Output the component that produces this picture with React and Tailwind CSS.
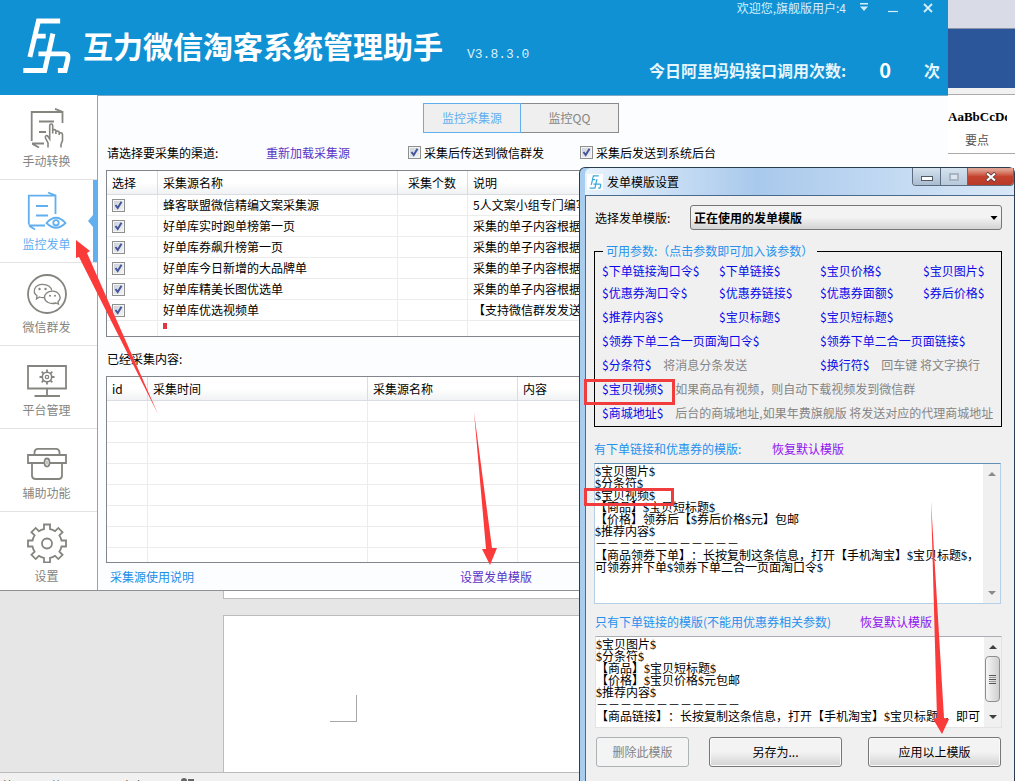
import React from 'react';

const UI = "font-['Noto_Sans_CJK_SC','Noto_Sans',sans-serif] [text-spacing-trim:space-all]";

function LogoMark({ className }) {
  return (
    <svg viewBox="18 20 152 172" className={className} fill="none" stroke="currentColor" strokeWidth="15" aria-hidden="true">
      <path d="M134 31.500H68L42 141M54 77.500H90" />
      <path d="M112 70L87 182H22" />
      <path d="M68 131.500H149Q160 133 157.500 146L149 182H127" />
    </svg>
  );
}

function gearPath(cx, cy, outer, inner, half, teeth) {
  const parts = [];
  const base = Math.sqrt(inner * inner - half * half);
  for (let k = 0; k < teeth; k += 1) {
    const a = (k * 2 * Math.PI) / teeth;
    const at = (x, y) =>
      `${(cx + x * Math.cos(a) - y * Math.sin(a)).toFixed(2)} ${(cy + x * Math.sin(a) + y * Math.cos(a)).toFixed(2)}`;
    parts.push(`${k === 0 ? 'M' : `A${inner} ${inner} 0 0 1 `}${at(-half, -base)}`);
    parts.push(`L${at(-half, -outer)}L${at(half, -outer)}L${at(half, -base)}`);
  }
  parts.push(`A${inner} ${inner} 0 0 1 ${cx - half} ${(cy - base).toFixed(2)}Z`);
  return parts.join('');
}

function Icon({ children }) {
  return (
    <svg viewBox="0 0 40 40" className="h-10 w-10" fill="none" stroke="currentColor" strokeWidth="1.8" aria-hidden="true">
      {children}
    </svg>
  );
}

const icons = {
  convert: (
    <Icon>
      <path d="M35.500 15V4H4.700V33M28 0.800L36 4M5 35.500H17M5.500 36L12 39.500" />
      <path d="M12 13.500H27M12 24H19" />
      <path d="M21 39.500V35L18.500 30C17.700 27.500 20 26.800 21 28.500L22.700 31V17.500C22.700 15.500 25.700 15.500 25.700 17.500V25.500V22.500C26.300 21.300 28.900 21.300 28.900 23V26V23.800C29.500 22.600 32.200 22.900 32.200 24.400V27V25.500C33 24.300 35.500 24.600 35.500 26.400V32.500L34 36.500V39.500" strokeWidth="1.600" />
    </Icon>
  ),
  monitor: (
    <Icon>
      <path d="M28.500 23V4.700H1.800V33.500M21 1.500L29 4.700M1.800 34.500H18M2.500 35L8 38.500" />
      <path d="M9 15H21M9 24.500H21" />
      <path d="M19.500 32Q29 21.500 38.500 32Q29 41.500 19.500 32Z" />
      <circle cx="29" cy="31.800" r="2.700" />
    </Icon>
  ),
  wechat: (
    <Icon>
      <circle cx="20" cy="20" r="19" />
      <path d="M17.500 23.500Q15 24 12.500 23L9.500 25L10 21.800C4.500 17.500 8 10.300 15.500 10.300C21 10.300 24.500 13.500 24.700 16.500" strokeWidth="1.300" />
      <path d="M29 29L31.500 30.200L31 27.800C35.500 24 32 17.200 25.500 17.200C20 17.200 17.300 20.500 17.500 23.500C17.700 27.700 23 30.700 29 29Z" strokeWidth="1.300" />
      <g fill="currentColor" stroke="none">
        <circle cx="12.500" cy="15" r="1.200" />
        <circle cx="18.500" cy="15" r="1.200" />
        <circle cx="23" cy="21.800" r="1" />
        <circle cx="28" cy="21.800" r="1" />
      </g>
    </Icon>
  ),
  platform: (
    <Icon>
      <path d="M1 9H39V31.500H1ZM20 31.500V39M7.500 39H33" />
      <circle cx="20" cy="20" r="4.700" strokeWidth="1.600" />
      <circle cx="20" cy="20" r="1.700" strokeWidth="1.200" />
      <path d="M20 12.500V15.500M20 24.500V27.500M12.500 20H15.500M24.500 20H27.500M14.700 14.700L16.800 16.800M23.200 23.200L25.300 25.300M14.700 25.300L16.800 23.200M23.200 16.800L25.300 14.700" />
    </Icon>
  ),
  tools: (
    <Icon>
      <path d="M7.500 15V12Q8 8.800 11 8.800H29Q32 8.800 32.500 12V15" />
      <path d="M17.500 23H1V15H39V23H22.500" />
      <path d="M5 23V36Q5.500 39 8.500 39H31.500Q34.500 39 35 36V23" />
      <ellipse cx="20" cy="22.500" rx="2.500" ry="4" />
      <path d="M20 20.500V24.500" strokeWidth="1" />
    </Icon>
  ),
  settings: (
    <Icon>
      <path d={gearPath(20, 20.500, 19, 14.800, 3, 8)} />
      <circle cx="20" cy="20.500" r="5" />
    </Icon>
  ),
};

const navItems = [
  { icon: 'convert', label: '手动转换' },
  { icon: 'monitor', label: '监控发单', active: true },
  { icon: 'wechat', label: '微信群发' },
  { icon: 'platform', label: '平台管理' },
  { icon: 'tools', label: '辅助功能' },
  { icon: 'settings', label: '设置' },
];

const sources = [
  ['蜂客联盟微信精编文案采集源', '5人文案小组专门编写'],
  ['好单库实时跑单榜第一页', '采集的单子内容根据跑单榜'],
  ['好单库券飙升榜第一页', '采集的单子内容根据飙升榜'],
  ['好单库今日新增的大品牌单', '采集的单子内容根据大品牌'],
  ['好单库精美长图优选单', '采集的单子内容根据长图'],
  ['好单库优选视频单', '【支持微信群发发送视频】'],
];

function CheckBox({ id, label }) {
  return (
    <span className="grid h-[13px] w-[13px] shrink-0">
      <input
        id={id}
        aria-label={label}
        type="checkbox"
        defaultChecked
        className="peer col-start-1 row-start-1 h-[13px] w-[13px] appearance-none border border-[#8e8f8f] bg-linear-to-br from-[#c9ced6] to-[#f6f6f6] shadow-[inset_0_0_0_1px_#f4f4f4]"
      />
      <svg viewBox="0 0 13 13" className="pointer-events-none col-start-1 row-start-1 hidden h-[13px] w-[13px] peer-checked:block" fill="none" stroke="#46569a" strokeWidth="2" aria-hidden="true">
        <path d="M3.500 6L5.700 9L9.500 2.800" />
      </svg>
    </span>
  );
}

function NavItem({ icon, label, active }) {
  return (
    <li className="h-[83px] border-b border-[#e3e3e3] last:h-[78px] last:border-b-0">
      <button
        type="button"
        className={`relative flex h-full w-full flex-col items-center justify-start border-r-4 pt-[11px] text-xs leading-[26px] ${
          active ? 'border-[#62aff0] text-[#62aff0]' : 'border-transparent text-[#85857f]'
        }`}
      >
        {icons[icon]}
        <span>{label}</span>
        {active && (
          <svg viewBox="0 0 5 12" className="absolute top-[35px] right-0 h-3 w-[5px]" fill="currentColor" aria-hidden="true">
            <path d="M5 0V12L0 6Z" />
          </svg>
        )}
      </button>
    </li>
  );
}

const headCell = 'h-6 border-r border-b border-[#d9dce0] bg-linear-to-b from-white from-50% to-[#f1f2f4] p-0 pl-[5px] text-left font-normal whitespace-nowrap';
const bodyCell = 'h-[21px] overflow-hidden border-r border-b border-[#ececec] p-0 pl-[5px] whitespace-nowrap';

function SourceTable() {
  return (
    <div className="h-[167px] overflow-hidden border border-[#82858c] bg-white">
      <table className="w-full table-fixed border-separate border-spacing-0 leading-5">
        <colgroup>
          <col className="w-[51px]" />
          <col className="w-[240px]" />
          <col className="w-[70px]" />
          <col />
        </colgroup>
        <thead>
          <tr>
            <th className={headCell}>选择</th>
            <th className={headCell}>采集源名称</th>
            <th className={`${headCell} pl-[10px]`}>采集个数</th>
            <th className={headCell}>说明</th>
          </tr>
        </thead>
        <tbody>
          {sources.map(([name, note]) => (
            <tr key={name}>
              <td className={bodyCell}>
                <CheckBox label={name} />
              </td>
              <td className={bodyCell}>{name}</td>
              <td className={bodyCell} />
              <td className={bodyCell}>{note}</td>
            </tr>
          ))}
          <tr>
            <td className={bodyCell} />
            <td className={`${bodyCell} pt-[2px] pl-[2px] align-top`}>
              <span className="block h-[6px] w-1 bg-[#e0383e]" />
            </td>
            <td className={bodyCell} />
            <td className={bodyCell} />
          </tr>
        </tbody>
      </table>
    </div>
  );
}

function CollectedTable() {
  return (
    <div className="h-[187px] overflow-hidden border border-[#82858c] bg-white">
      <table className="w-full table-fixed border-separate border-spacing-0 leading-5">
        <colgroup>
          <col className="w-[41px]" />
          <col className="w-[220px]" />
          <col className="w-[150px]" />
          <col />
        </colgroup>
        <thead>
          <tr>
            {['id', '采集时间', '采集源名称', '内容'].map((t) => (
              <th key={t} className={headCell}>{t}</th>
            ))}
          </tr>
        </thead>
        <tbody>
          {[0, 1, 2, 3, 4, 5, 6, 7].map((r) => (
            <tr key={r}>
              <td className={bodyCell} />
              <td className={bodyCell} />
              <td className={bodyCell} />
              <td className={bodyCell} />
            </tr>
          ))}
        </tbody>
      </table>
    </div>
  );
}

function MainWindow() {
  return (
    <section className="absolute top-0 right-[67px] left-0 flex flex-col border-b border-[#8e9092] bg-[#fcfdff]">
      <header className="flex h-[95px] justify-between bg-[#0f91d4] text-white">
        <div className="flex items-start pt-[17px] pl-[22px]">
          <LogoMark className="h-[57px] w-[50px]" />
          <h1 className="ml-[11px] text-[30px] leading-[56px] font-bold whitespace-nowrap">互力微信淘客系统管理助手</h1>
          <span className="mt-7 ml-6 font-['Liberation_Mono',monospace] text-[13px] leading-5 text-[#d9f0fb]">V3.8.3.0</span>
        </div>
        <div className="flex flex-col items-end pr-2">
          <div className="flex h-4 items-center text-[#d5effb]">
            <span className="mr-[13px] text-xs leading-4 whitespace-nowrap">欢迎您,旗舰版用户:4</span>
            <div className="flex items-center gap-[19px] pr-[7px]">
              <button type="button" aria-label="菜单">
                <svg viewBox="0 0 10 12" className="h-3 w-[10px]" fill="currentColor"><path d="M1 1H9V2.500H1ZM1 4.500H9L5 9Z" /></svg>
              </button>
              <button type="button" aria-label="最小化">
                <svg viewBox="0 0 10 12" className="h-3 w-[10px]" stroke="currentColor" strokeWidth="1.200"><path d="M0 9.500H10" /></svg>
              </button>
              <button type="button" aria-label="关闭" className="ml-[6px]">
                <svg viewBox="0 0 10 12" className="h-3 w-[10px]" fill="none" stroke="currentColor" strokeWidth="1.800"><path d="M1 2L9 10M9 2L1 10" /></svg>
              </button>
            </div>
          </div>
          <div className="mt-[38px] flex items-center font-bold whitespace-nowrap">
            <span className="text-base leading-8 text-[#e6f6fd]">今日阿里妈妈接口调用次数:</span>
            <span className="ml-[33px] text-xl leading-8">0</span>
            <span className="ml-[33px] text-base leading-8 text-[#e6f6fd]">次</span>
          </div>
        </div>
      </header>
      <div className="flex text-xs">
        <nav className="w-[97px] shrink-0 bg-white pt-[2px]">
          <ul>
            {navItems.map((item) => (
              <NavItem key={item.label} {...item} />
            ))}
          </ul>
        </nav>
        <main className="flex min-w-0 flex-1 flex-col border-t border-l border-[#7fa9c4] pr-3 pl-2">
          <div className="mt-[7px] flex justify-center text-[#85857f]">
            <button type="button" className="h-[30px] w-[98px] border border-[#62aff0] bg-[#efefef] text-[#62aff0]">监控采集源</button>
            <button type="button" className="h-[30px] w-[98px] border border-l-0 border-[#8b8b8b] bg-[#efefef]">监控QQ</button>
          </div>
          <div className="flex h-[37px] items-center pt-[2px] pl-px leading-5 whitespace-nowrap">
            <span className="w-[159px]">请选择要采集的渠道:</span>
            <a href="#reload" className="w-[142px] text-[#5b35c4]">重新加载采集源</a>
            <div className="flex w-[172px] items-center gap-[3px]">
              <CheckBox id="to-group" />
              <label htmlFor="to-group">采集后传送到微信群发</label>
            </div>
            <div className="flex items-center gap-[3px]">
              <CheckBox id="to-backend" />
              <label htmlFor="to-backend">采集后发送到系统后台</label>
            </div>
          </div>
          <SourceTable />
          <div className="h-[39px] pt-3 pl-px leading-5">已经采集内容:</div>
          <CollectedTable />
          <div className="flex h-[27px] items-center pl-1">
            <a href="#guide" className="w-[350px] text-[#1a8fe6]">采集源使用说明</a>
            <a href="#template" className="text-[#5b35c4]">设置发单模版</a>
          </div>
        </main>
      </div>
    </section>
  );
}

function Param({ children }) {
  return (
    <button type="button" className="text-left whitespace-nowrap text-[#0808e8]">{children}</button>
  );
}

function Params() {
  const row = 'grid grid-cols-[117px_101px_103px_1fr]';
  const hint = 'whitespace-nowrap text-[#858585]';
  return (
    <fieldset className="mx-2 h-[184px] border border-black pl-[7px] leading-[22px]">
      <legend className="ml-[1px] pr-1 pl-[3px] leading-4 text-[#2592ee]">可用参数:（点击参数即可加入该参数）</legend>
      <div className={`${row} pt-px`}>
        <Param>$下单链接淘口令$</Param>
        <Param>$下单链接$</Param>
        <Param>$宝贝价格$</Param>
        <Param>$宝贝图片$</Param>
      </div>
      <div className={row}>
        <Param>$优惠券淘口令$</Param>
        <Param>$优惠券链接$</Param>
        <Param>$优惠券面额$</Param>
        <Param>$券后价格$</Param>
      </div>
      <div className="flex flex-col gap-[2px] pt-[2px]">
        <div className={row}>
          <Param>$推荐内容$</Param>
          <Param>$宝贝标题$</Param>
          <Param>$宝贝短标题$</Param>
        </div>
        <div className="grid grid-cols-[218px_1fr]">
          <Param>$领券下单二合一页面淘口令$</Param>
          <Param>$领券下单二合一页面链接$</Param>
        </div>
        <div className="grid grid-cols-[218px_1fr]">
          <div className="flex gap-3">
            <Param>$分条符$</Param>
            <span className={hint}>将消息分条发送</span>
          </div>
          <div className="flex gap-3">
            <Param>$换行符$</Param>
            <span className={hint}>回车键 将文字换行</span>
          </div>
        </div>
        <div className="flex gap-3">
          <Param>$宝贝视频$</Param>
          <span className={hint}>如果商品有视频，则自动下载视频发到微信群</span>
        </div>
        <div className="flex gap-3">
          <Param>$商城地址$</Param>
          <span className={hint}>后台的商城地址,如果年费旗舰版 将发送对应的代理商城地址</span>
        </div>
      </div>
    </fieldset>
  );
}

const templateA = `$宝贝图片$
$分条符$
$宝贝视频$
【商品】$宝贝短标题$
【价格】领券后【$券后价格$元】包邮
$推荐内容$
－－－－－－－－－－－－
【商品领券下单】：长按复制这条信息，打开【手机淘宝】$宝贝标题$，
可领券并下单$领券下单二合一页面淘口令$`;

const templateB = `$宝贝图片$
$分条符$
【商品】$宝贝短标题$
【价格】$宝贝价格$元包邮
$推荐内容$
－－－－－－－－－－－－
【商品链接】：长按复制这条信息，打开【手机淘宝】$宝贝标题$，即可`;

function TemplateBox({ id, text, thumb, className }) {
  return (
    <div className={`flex border bg-white ${className}`}>
      <textarea
        id={id}
        defaultValue={text}
        className="min-w-0 flex-1 resize-none overflow-hidden pt-[2px] font-['Liberation_Serif','Noto_Sans_CJK_SC',serif] text-xs leading-3 whitespace-pre text-black outline-none [text-spacing-trim:space-all]"
      />
      <div className="flex w-[17px] flex-col items-center justify-between bg-[#f0f0f0] py-[6px]">
        <svg viewBox="0 0 8 8" className="h-2 w-2" fill={thumb ? '#404040' : '#8a8a8a'} aria-hidden="true"><path d="M0 6L4 2L8 6Z" /></svg>
        {thumb && (
          <div className="mb-[6px] flex h-[46px] w-[15px] flex-col items-center justify-center gap-px rounded-sm border border-[#8d8d8d] bg-linear-to-r from-[#f6f6f6] to-[#cfcfcf]">
            <i className="h-px w-[7px] bg-[#555]" />
            <i className="h-px w-[7px] bg-[#999]" />
            <i className="h-px w-[7px] bg-[#555]" />
            <i className="h-px w-[7px] bg-[#999]" />
            <i className="h-px w-[7px] bg-[#555]" />
          </div>
        )}
        <svg viewBox="0 0 8 8" className="h-2 w-2" fill={thumb ? '#404040' : '#8a8a8a'} aria-hidden="true"><path d="M0 2L4 6L8 2Z" /></svg>
      </div>
    </div>
  );
}

const formButton = 'h-[30px] rounded-[3px] border border-[#777] bg-linear-to-b from-[#f3f3f3] from-50% to-[#d3d3d3] shadow-[inset_0_0_0_1px_#fafafa]';

function TemplateDialog() {
  return (
    <section className="absolute top-[167px] right-0 bottom-0 flex w-[436px] flex-col rounded-t-[6px] border border-b-0 border-[#2c3d52] bg-linear-to-r from-[#a9cdee] to-[#b5d4f1] pl-[5px] text-xs text-black">
      <header className="flex h-[27px] justify-between rounded-t-[6px] bg-linear-to-r from-[#e8f2fc] via-[#a9c9ec] via-40% to-[#d9e8f7]">
        <div className="flex items-center gap-1 pl-[2px]">
          <span className="flex h-4 w-4 items-center justify-center bg-white text-[#3ba7dd]">
            <LogoMark className="h-[14px] w-[13px]" />
          </span>
          <h2 className="leading-5">发单模版设置</h2>
        </div>
        <div className="flex h-[18px] overflow-hidden rounded-b-[4px] border border-t-0 border-[#5b6b80]">
          <button type="button" aria-label="最小化" className="flex w-7 items-center justify-center border-r border-[#5b6b80] bg-linear-to-b from-[#d5e2ef] to-[#a9bccf]">
            <span className="mt-1 h-[5px] w-3 border border-[#4f5a68] bg-white" />
          </button>
          <button type="button" aria-label="最大化" disabled className="flex w-[27px] items-center justify-center border-r border-[#5b6b80] bg-linear-to-b from-[#d5e2ef] to-[#b7c9db]">
            <span className="h-2 w-[10px] border-2 border-[#a8b4c2] bg-[#dde6ef]" />
          </button>
          <button type="button" aria-label="关闭" className="flex w-[45px] items-center justify-center bg-linear-to-b from-[#e0a090] from-10% via-[#c5432f] via-50% to-[#b83a28]">
            <svg viewBox="0 0 12 10" className="h-[10px] w-3" fill="none" aria-hidden="true">
              <path d="M1.500 1L10.500 9M10.500 1L1.500 9" stroke="#5b3a3a" strokeWidth="3.600" />
              <path d="M2 1.500L10 8.500M10 1.500L2 8.500" stroke="#fff" strokeWidth="2.200" />
            </svg>
          </button>
        </div>
      </header>
      <div className="flex min-h-0 flex-1 flex-col border-t border-l border-[#4a6a8c] bg-[#f0f0f0]">
        <div className="flex items-center pt-[9px] pr-3 pl-[9px]">
          <label htmlFor="template" className="w-[95px]">选择发单模版:</label>
          <div className="grid flex-1 items-center">
            <select
              id="template"
              className="col-start-1 row-start-1 h-[25px] appearance-none rounded-[3px] border border-[#777] bg-linear-to-b from-[#f3f3f3] from-50% to-[#d3d3d3] pl-[3px] font-bold"
            >
              <option>正在使用的发单模版</option>
            </select>
            <svg viewBox="0 0 8 8" className="pointer-events-none col-start-1 row-start-1 mr-1 h-2 w-2 justify-self-end" aria-hidden="true"><path d="M0.500 2H7.500L4 6Z" /></svg>
          </div>
        </div>
        <div className="mt-[13px] pr-1">
          <Params />
        </div>
        <div className="mt-3 flex h-5 pl-2 leading-5">
          <label htmlFor="tpl-coupon" className="w-[178px] text-[#2592ee]">有下单链接和优惠券的模版:</label>
          <button type="button" className="text-[#8e14f0]">恢复默认模版</button>
        </div>
        <TemplateBox id="tpl-coupon" text={templateA} className="mt-1 mr-[13px] ml-2 h-[141px] border-t-[#5f8fb5] border-r-[#b5cfe7] border-b-[#b5cfe7] border-l-[#b5cfe7]" />
        <div className="mt-2 flex h-5 pl-[9px] leading-5">
          <label htmlFor="tpl-link" className="w-[265px] text-[#2592ee]">只有下单链接的模版(不能用优惠券相关参数)</label>
          <button type="button" className="text-[#8e14f0]">恢复默认模版</button>
        </div>
        <TemplateBox id="tpl-link" text={templateB} thumb className="mt-1 mr-3 ml-[9px] h-[92px] border-[#e3e3e3] border-t-[#abadb3]" />
        <div className="mt-[9px] flex pr-[13px] pl-[10px]">
          <button type="button" disabled className="h-[30px] w-[93px] rounded-[3px] border border-[#adb2b5] bg-[#f4f4f4] text-[#838383]">删除此模版</button>
          <button type="button" className={`${formButton} ml-5 w-[133px]`}>另存为...</button>
          <button type="button" className={`${formButton} ml-auto w-[133px]`}>应用以上模版</button>
        </div>
      </div>
      <div className="pointer-events-none absolute top-[211px] left-1 h-[26px] w-[91px] border-3 border-[#f03c3c]" />
      <div className="pointer-events-none absolute top-[320px] left-1 h-[18px] w-[90px] border-3 border-[#f03c3c]" />
      <svg viewBox="0 0 24 236" className="pointer-events-none absolute top-[333px] right-[63px] h-[236px] w-6" fill="#fb3b3a" aria-hidden="true">
        <path d="M4 0L17 217L22 218L15 233L6 218L10 217Z" />
      </svg>
    </section>
  );
}

function DocumentWindow() {
  return (
    <section className="flex min-h-screen flex-col bg-[#e6e6e6]">
      <div className="h-7 bg-[#d9dbe7]" />
      <div className="h-[60px] border-t border-[#8b93a8] bg-[#2b579a]" />
      <div className="h-[6px] bg-[#f1f1f1]" />
      <div className="flex h-[60px] justify-end border-y border-[#ababab] bg-white">
        <div className="flex w-[67px] flex-col pt-[12px] leading-5">
          <span className="w-[59px] overflow-hidden font-['Liberation_Serif',serif] text-[13px] leading-5 font-bold whitespace-nowrap">AaBbCcDd</span>
          <span className="pt-[3px] pl-[17px] text-xs leading-5 text-[#555]">要点</span>
        </div>
      </div>
      <div className="flex flex-1 flex-col gap-4 pl-[223px]">
        <div className="h-[445px] border-b border-l border-[#bcbcbc] bg-white" />
        <div className="flex-1 border-t border-l border-[#bcbcbc] bg-white pt-[79px] pl-[106px]">
          <div className="h-[27px] w-[27px] border-r border-b border-[#a8a8a8]" />
        </div>
      </div>
      <footer className="flex h-[9px] overflow-hidden border-t border-[#bcbcbc] bg-[#f1f1f1] pt-[5px] text-xs leading-4 whitespace-nowrap text-[#444]">
        <span className="w-[180px] pl-[2px]">第 2 页，共 2 页　312 个字</span>
        <svg viewBox="0 0 14 8" className="h-2 w-[14px]" fill="#666" aria-hidden="true">
          <circle cx="4" cy="3" r="3" />
          <path d="M8 1H14V6H12V3H8Z" />
        </svg>
      </footer>
    </section>
  );
}

export default function App() {
  return (
    <div className={`relative min-h-screen overflow-hidden ${UI}`}>
      <DocumentWindow />
      <MainWindow />
      <svg viewBox="0 0 84 174" className="pointer-events-none absolute top-[240px] left-[75px] h-[174px] w-[84px]" fill="#fb3b3a" aria-hidden="true">
        <path d="M1 0L15 11L12 13L83 174L4 17L1 18Z" />
      </svg>
      <svg viewBox="0 0 24 154" className="pointer-events-none absolute top-[412px] left-[474px] h-[154px] w-6" fill="#fb3b3a" aria-hidden="true">
        <path d="M0 0L18 136L23 136L16 153L8 137L12 137Z" />
      </svg>
      <TemplateDialog />
    </div>
  );
}
